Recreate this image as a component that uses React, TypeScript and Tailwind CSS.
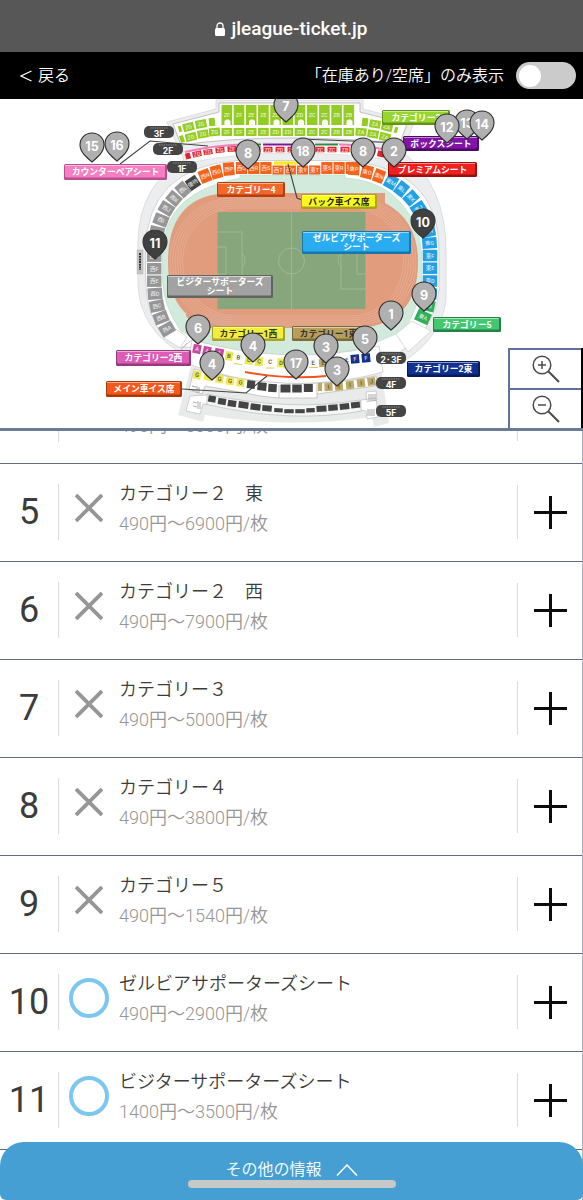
import { useState } from "react";

type Seat = [x: number, y: number, w: number, h: number, rot: number, fill: string, text: string];

const GREEN = "#93cc22";
const RED = "#e2232b";
const ORANGE = "#f2641c";
const GRAY = "#969696";
const BLUE = "#22a0e6";
const DARK = "#444";
const YELLOW = "#f0ea50";
const MAGENTA = "#c9489f";
const TAN = "#c0a962";
const NAVY = "#10308a";

const upper = ["ZF", "ZF", "ZE", "ZE", "ZD", "ZD", "ZD", "ZC", "ZC", "ZB", "ZB"];

const seats: Seat[] = [
  ...upper.map((t, i): Seat => [226.8 + i * 12.2, 115, 10.6, 20, 0, GREEN, t]),
  ...upper.map((t, i): Seat => [226.8 + i * 12.2, 132, 10.6, 8, 0, GREEN, t]),
  [212, 122, 6, 8, -6, GREEN, ""],
  [201, 124, 11, 8, -10, GREEN, "ZG"],
  [188.5, 127, 11, 8, -15, GREEN, "ZG"],
  [180, 129, 3, 6, -18, GREEN, ""],
  [214.5, 132, 11, 8, -5, GREEN, "ZG"],
  [203, 134, 11, 8, -9, GREEN, "ZG"],
  [191, 137, 11, 8, -14, GREEN, "ZG"],
  [182, 139, 4, 7, -18, GREEN, ""],
  [365, 122, 6, 8, 6, GREEN, ""],
  [375, 124, 11, 8, 9, GREEN, "ZA"],
  [387, 127, 11, 8, 14, GREEN, "ZA"],
  [396, 130, 3, 6, 18, GREEN, ""],
  [361, 132, 11, 8, 4, GREEN, "ZA"],
  [373, 134, 11, 8, 9, GREEN, "ZA"],
  [385, 137, 11, 8, 14, GREEN, "ZA"],
  [188, 156, 5, 6, -16, RED, ""],
  [197, 154, 9, 5.5, -12, RED, "ZG"],
  [208, 152, 9, 5.5, -8, RED, "ZG"],
  [220, 150, 9, 5.5, -5, RED, "ZG"],
  [232, 149, 9, 5.5, -3, RED, "ZF"],
  [244, 149, 9, 5.5, 0, RED, ""],
  [256, 149, 9, 5.5, 0, RED, ""],
  ...[268, 280, 292].map((x): Seat => [x, 149.5, 9, 5.5, 0, RED, "ZD"]),
  [304, 149, 9, 5.5, 0, RED, ""],
  ...[320, 332].map((x): Seat => [x, 149.5, 9, 5.5, 0, RED, "ZC"]),
  [345, 149.5, 9, 5.5, 0, RED, "ZB"],
  [357, 150, 9, 5.5, 3, RED, ""],
  [371, 151, 9, 5.5, 8, RED, "ZA"],
  [381, 154, 7, 6, 14, RED, ""],
  [193, 183, 12, 12, -34, DARK, "優待"],
  [205, 176, 11, 13, -22, ORANGE, "西N"],
  [216.5, 172, 11, 13, -14, ORANGE, "西O"],
  [228.8, 169, 11, 13, -5, ORANGE, "西P"],
  ...["西Q", "西R", "西S", "西T", "西Y", "東Y", "東T", "東S", "東R", "東Q"].map(
    (t, i): Seat => [241.5 + i * 12.2, i > 2 && i < 7 ? 170 : 168, 11.2, i > 2 && i < 7 ? 9 : 12, 0, ORANGE, t],
  ),
  [354, 169, 11, 12.5, 4, ORANGE, "東P"],
  [367, 172, 11.5, 13, 13, ORANGE, "東O"],
  [379, 176, 10.5, 13, 21, ORANGE, "東N"],
  [391, 182, 11.5, 13.5, 30, BLUE, "東M"],
  [401.5, 189, 11, 14, 38, BLUE, "東L"],
  [411, 198, 11, 14, 48, BLUE, "東K"],
  [418.5, 208.5, 14.5, 11, -33, BLUE, "東J"],
  [424, 220, 14.5, 11, -22, BLUE, "東I"],
  [428, 231.5, 14.5, 11, -12, BLUE, "東H"],
  [429.5, 243, 14.5, 11, -4, BLUE, "東G"],
  [430, 255.5, 14.5, 11.5, 0, BLUE, "東F"],
  [430, 268.2, 14.5, 11.5, 0, BLUE, "東E"],
  [430, 281, 14.5, 11.5, 0, BLUE, "東D"],
  [429.5, 293.5, 14.5, 11, 4, BLUE, "東C"],
  [427.5, 305.5, 14.5, 11, 13, "#2fae5c", "東B"],
  [423, 317, 14.5, 11.5, 25, "#2fae5c", "東A"],
  [183, 189.5, 11, 14, -42, GRAY, "西L"],
  [174, 198.5, 14, 11, 40, GRAY, "西K"],
  [166.5, 208.5, 14.5, 11, 31, GRAY, "西J"],
  [161, 220, 14.5, 11, 21, GRAY, "西I"],
  [157, 232, 14.5, 11, 12, GRAY, "西H"],
  [155, 244, 14.5, 11, 4, GRAY, "西H"],
  [154.2, 256.2, 14.5, 11.4, 0, GRAY, "西G"],
  [154.2, 268.7, 14.5, 11.4, 0, GRAY, "西F"],
  [154.2, 281.2, 14.5, 11.4, 0, GRAY, "西E"],
  [155, 293.7, 14.5, 11.4, -4, GRAY, "西D"],
  [157, 306, 14.5, 11.2, -12, GRAY, "西C"],
  [161, 317.7, 14.5, 11.2, -21, GRAY, "西B"],
  [167, 329, 14.5, 11.2, -30, GRAY, "西A"],
  [197, 349, 8, 9, 12, MAGENTA, "A"],
  [207, 351, 8, 9, 12, MAGENTA, "A"],
  [219, 353, 9, 9, 12, MAGENTA, "A"],
  [229, 356, 7.5, 9, 8, YELLOW, "B"],
  [238.5, 357.5, 7.5, 8, 8, "#fdfdf4", "B"],
  [249, 360, 8, 9, 8, YELLOW, "C"],
  [259, 361.5, 8, 9, 5, YELLOW, "C"],
  [270, 362, 8, 8, 4, "#fdfdf4", "C"],
  [281, 363, 7.5, 9, 2, YELLOW, "D"],
  [303, 363, 7, 8, 0, TAN, ""],
  [313, 363, 8, 8, -2, "#fbf9f2", "E"],
  [323, 363, 8, 8, -4, TAN, "E"],
  [347, 360, 7, 8, -6, "#fff", "E"],
  [355, 359, 8.5, 9, -5, NAVY, "F"],
  [366, 358, 8.5, 9, -5, NAVY, "F"],
  [197, 375, 8, 8, 10, YELLOW, "G"],
  [208, 377, 8, 7, 10, YELLOW, ""],
  [219.5, 379, 8, 8, 8, YELLOW, "G"],
  [230, 381, 8, 8, 8, YELLOW, "G"],
  [240.5, 382.5, 8, 8, 6, YELLOW, "G"],
  [251, 384.5, 8, 8, 6, DARK, ""],
  [262, 386.5, 9, 8, 5, DARK, ""],
  [272.5, 388, 8.5, 8, 4, DARK, ""],
  [285.5, 388.5, 10, 8, 0, DARK, ""],
  [297, 388.5, 9.5, 8, 0, DARK, ""],
  [308.3, 388, 9, 8, 0, DARK, ""],
  [320, 387, 4, 8, 0, TAN, ""],
  [328.5, 387, 8, 8, -3, TAN, "I"],
  [339, 386.5, 8, 8, -4, TAN, "I"],
  [350, 385, 8, 8, -6, TAN, "I"],
  [361, 383, 8, 8, -7, TAN, "I"],
  [371.5, 381.5, 8, 8, -8, TAN, "J"],
  [212, 399, 7.5, 6.5, 9, DARK, ""],
  [222, 401.5, 8, 6.5, 9, DARK, ""],
  [232, 403.5, 8.5, 6.5, 9, DARK, ""],
  [243.5, 405, 10, 6.5, 8, DARK, ""],
  [255.5, 407, 10, 6.5, 7, DARK, ""],
  [267, 408.3, 9.5, 6, 5, DARK, ""],
  [278.5, 410.3, 8.5, 4, 3, DARK, ""],
  [289, 411.2, 9.5, 4, 0, DARK, ""],
  [300, 411.2, 9.5, 4, 0, DARK, ""],
  [310.5, 410.3, 8.5, 4.2, -2, DARK, ""],
  [321.5, 408.7, 10, 6, -3, DARK, ""],
  [333, 407.6, 9.5, 6, -4, DARK, ""],
  [344.5, 406.5, 9.5, 6, -6, DARK, ""],
  [355.5, 405, 9, 6, -7, DARK, ""],
];

type Label = { x: number; y: number; w: number; h: number; fill: string; edge: string; ink: string; lines: string[] };

const labels: Label[] = [
  { x: 64, y: 164, w: 103, h: 16, fill: "#f57fc0", edge: "#b94f8c", ink: "#fff", lines: ["カウンターペアシート"] },
  { x: 217, y: 182, w: 68, h: 15, fill: "#f4672a", edge: "#b53f0d", ink: "#fff", lines: ["カテゴリー4"] },
  { x: 301, y: 194, w: 76, h: 15, fill: "#fbf91c", edge: "#a9a616", ink: "#222", lines: ["バック車イス席"] },
  { x: 302, y: 231, w: 109, h: 23, fill: "#2aacf0", edge: "#1676ae", ink: "#fff", lines: ["ゼルビアサポーターズ", "シート"] },
  { x: 382, y: 110, w: 68, h: 15, fill: "#97d530", edge: "#639417", ink: "#fff", lines: ["カテゴリー3"] },
  { x: 403, y: 136, w: 76, h: 15, fill: "#8014a6", edge: "#4d0a66", ink: "#fff", lines: ["ボックスシート"] },
  { x: 388, y: 162, w: 89, h: 15, fill: "#f0201f", edge: "#9d100f", ink: "#fff", lines: ["プレミアムシート"] },
  { x: 167, y: 275, w: 106, h: 23, fill: "#a2a2a2", edge: "#636363", ink: "#fff", lines: ["ビジターサポーターズ", "シート"] },
  { x: 212, y: 326, w: 73, h: 15, fill: "#f3ee3c", edge: "#a8a32c", ink: "#333", lines: ["カテゴリー1西"] },
  { x: 292, y: 326, w: 73, h: 15, fill: "#b79f5b", edge: "#7d6a34", ink: "#333", lines: ["カテゴリー1東"] },
  { x: 116, y: 350, w: 75, h: 16, fill: "#dd5cb6", edge: "#953a7a", ink: "#fff", lines: ["カテゴリー2西"] },
  { x: 106, y: 381, w: 76, h: 16, fill: "#f4581a", edge: "#ab390b", ink: "#fff", lines: ["メイン車イス席"] },
  { x: 433, y: 317, w: 68, h: 15, fill: "#42c970", edge: "#268047", ink: "#fff", lines: ["カテゴリー5"] },
  { x: 407, y: 361, w: 73, h: 16, fill: "#10318f", edge: "#081b56", ink: "#fff", lines: ["カテゴリー2東"] },
];

const floors: [number, number, string][] = [
  [144, 126, "3F"],
  [153, 143, "2F"],
  [167, 161, "1F"],
  [376, 352, "2･3F"],
  [376, 377, "4F"],
  [376, 405, "5F"],
];

// Marker number, horizontal centre and top edge in map units.
const pins: [number, number, number][] = [
  [15, 92, 132],
  [16, 117, 131],
  [8, 248, 139],
  [7, 286, 92],
  [18, 303, 137],
  [8, 363, 137],
  [2, 394, 137],
  [13, 467, 109],
  [14, 482, 110],
  [12, 447, 113],
  [10, 423, 208],
  [11, 155, 229],
  [9, 424, 281],
  [1, 391, 300],
  [5, 365, 325],
  [6, 198, 314],
  [4, 212, 350],
  [4, 253, 332],
  [17, 296, 349],
  [3, 326, 333],
  [3, 337, 356],
];

function StadiumMap() {
  return (
    <svg viewBox="0 99 583 329" className="block w-full" role="img" aria-label="座席図">
      {/* stand outlines */}
      <path
        d="M167 122 L216 109 V100 H363 V109 L414 122 L403 152 Q446 186 446 250 V300 Q442 335 406 360 L380 345 H200 L184 355 Q140 330 138 285 V240 Q140 184 184 160 Z"
        fill="#ecedee"
        stroke="#d5d7d8"
        strokeWidth="0.8"
      />
      <path d="M173 124 L219 112 V103 H360 V112 L407 124 L400 143 Q340 138 290 138 Q230 138 181 145 Z" fill="#fdfdfd" stroke="#aaa" strokeWidth="0.7" />
      <path d="M183 152 Q240 142 290 142 Q350 142 394 150 L390 160 Q345 153 290 153 Q235 153 188 163 Z" fill="#fff" stroke="#d0d0d0" strokeWidth="0.5" />
      <path
        d="M236 160.500 H345 Q439 168 439 250 V290 Q438 312 419 338 L400 352 L180 347 L164 337 Q146 315 145.500 280 V250 Q147 168 236 160.500 Z"
        fill="#fff"
        stroke="#bbb"
        strokeWidth="0.6"
      />
      <path
        d="M240 178 V175 H345 V178 Q384 180 405 208 Q420 228 421.500 252 V288 Q418 305 409 322 L398 333 L366 347 Q290 366 200 342 L181 331 Q163 306 162.500 280 V250 Q165 192 240 178 Z"
        fill="#d2eadc"
        stroke="#b9d8c8"
        strokeWidth="0.6"
      />
      <path d="M168 262 Q168 194 230 193 H385 V203 Q418 220 418 262 Q418 328 352 328 H232 Q168 328 168 262 Z" fill="#e19c7e" />
      <path d="M186 314 H232 V328 H205 Q192 324 186 316 Z" fill="#dd9e86" />
      {[0, 2.5, 5, 7.5, 10, 12.5].map((i) => (
        <rect
          key={i}
          x={170 + i}
          y={198 + i * 0.8}
          width={246 - i * 2}
          height={128 - i * 1.6}
          rx={63 - i * 0.8}
          fill="none"
          stroke="#ebbaa4"
          strokeWidth="0.5"
        />
      ))}
      {/* pitch */}
      <rect x="217.500" y="212" width="148" height="97" fill="#87a67c" />
      <g fill="none" stroke="#a6c098" strokeWidth="0.7">
        <path d="M291.500 212 V309 M217 232 H242 V289 H217 M217 247 H226 V274 H217 M366 232 H341 V289 H366 M366 247 H357 V274 H366" />
        <circle cx="291.500" cy="261" r="13" />
        <path d="M242 253 Q248 261 242 268 M341 253 Q335 261 341 268" />
      </g>
      {/* main stand */}
      <path d="M187 343 L180 351 L188 361 M181 349 L193 339" fill="none" stroke="#bbb" strokeWidth="0.8" />
      <path d="M164 338 L176 329 L187 337 L180 348 Z M396 334 L412 321 L431 331 L408 352 Z" fill="#fff" stroke="#ccc" strokeWidth="0.7" />
      <path d="M191 366 L178 415 L203 422 L205 415 Q290 429 372 417 L374 427 L389 423 L380 362 Q290 390 191 366 Z" fill="#e9ebeb" />
      <path d="M192 340 L188 364 Q240 383 290 384 Q345 383 383 372 L379 346 L372 347 Q290 366 192 340 Z" fill="#fff" stroke="#c4c4c4" strokeWidth="0.7" />
      <path d="M194 369 L189 390 L202 394 L205 386 L245 393 Q262 397 279 398 H317 V394 L368 387 L379 385 L376 376 Q290 394 194 369 Z" fill="#fff" stroke="#b4b4b4" strokeWidth="0.7" />
      <path d="M279 385 V398 M317 384 V394" stroke="#999" strokeWidth="0.6" />
      <path d="M207 394 L205 404 Q290 424 362 411 L360 400 Q290 412 207 394 Z" fill="#f4f5f5" stroke="#b4b4b4" strokeWidth="0.6" />
      <path d="M190 396 L186 411 L200 414 L203 404 L207 404 L207 395 Z M361 400 V410 L366 411 L367 419 L378 417 L376 398 Z M366 392 L367 402 L377 400 L376 391 Z" fill="#fff" stroke="#b4b4b4" strokeWidth="0.6" />
      <path
        d="M192 386 l4 1 m-4 3 l4 1 m1 -5 v7 m2 -6 v6 M193 402 l4 1 m-4 3 l4 1 m1 -6 v8 m2 -7 v7 M369 394 v7 m2 -7 v7 m2 -7 v7 m2 -7 v7 M368 409 v7 m2 -7 v7 m2 -7 v7 m2 -7 v7"
        stroke="#888"
        strokeWidth="0.7"
        fill="none"
      />
      <path d="M245 372 Q290 380 326 376" fill="none" stroke="#f0541c" strokeWidth="2" />
      <path d="M234 363.500 l8 1 M266 368 h8 M309 367.500 h9" stroke="#d8c860" strokeWidth="1" />
      {/* stripes above the red row */}
      <g fill="none" strokeWidth="1.800">
        <path d="M185 152 Q215 145 243 144.500 M339 144.500 Q365 145 386 150" stroke="#f07fc0" />
        <path d="M243 144.500 H261 M315 144.500 H338" stroke="#2f8a48" />
        <path d="M263 144.500 H314" stroke="#76189a" />
        <path d="M274 163 H298" stroke="#f7ea22" strokeWidth="3.400" />
      </g>
      {seats.map(([x, y, w, h, rot, fill, text], i) => (
        <g key={i} transform={`translate(${x} ${y}) rotate(${rot})`}>
          <rect x={-w / 2} y={-h / 2} width={w} height={h} fill={fill} />
          {text && (
            <text
              y="2"
              textAnchor="middle"
              fontSize={text.length === 1 ? 6 : 5.5}
              fontWeight="500"
              fill={text.length === 1 ? (fill === NAVY || fill === MAGENTA ? "#e8c8e8" : "#555") : "#ffffffc8"}
            >
              {text}
            </text>
          )}
        </g>
      ))}
      {[224.500, 249, 273.500, 298, 322, 346.500].map((x) => (
        <path key={x} d={`M${x} 125.500 v-4.500 l2 -1.500 h2 l2 1.500 v4.500 z`} fill="#fff" />
      ))}
      <rect x="137" y="250" width="6" height="24" fill="#c4c4c4" stroke="#aaa" strokeWidth="0.4" />
      <path d="M140 253 V270" stroke="#333" strokeWidth="2" strokeDasharray="2 0.700" />
      {/* leader lines */}
      <g fill="none" stroke="#444" strokeWidth="1.100">
        <path d="M120 164 L150 141 L208 146" />
        <path d="M300 139 L403 143" />
        <path d="M288 164 L297 198 L302 200" />
        <path d="M182 389 L246 393 L267 376" />
      </g>
      {floors.map(([x, y, t]) => (
        <g key={t}>
          <rect x={x} y={y} width="30" height="12" rx="5" fill="#454545" />
          <path d={`M${x + 6} ${y + 2} h18`} stroke="#8d8d8d" strokeWidth="1.200" strokeDasharray="1.500 0.800" />
          <text x={x + 15} y={y + 10.5} textAnchor="middle" fontSize="8.500" fontWeight="700" fill="#fff" fontFamily="Inter, sans-serif">
            {t}
          </text>
        </g>
      ))}
      {labels.map((l) => (
        <g key={l.lines[0]}>
          <rect x={l.x} y={l.y} width={l.w} height={l.h} rx="1.500" fill={l.edge} />
          <rect x={l.x + 1} y={l.y + 1} width={l.w - 3} height={l.h - 3.5} rx="1" fill={l.fill} />
          <path d={`M${l.x + 1} ${l.y + 1.5} h${l.w - 3}`} stroke="#ffffff80" strokeWidth="1" />
          {l.lines.map((t, i) => (
            <text
              key={t}
              x={l.x + l.w / 2}
              y={l.lines.length === 1 ? l.y + 10.8 : l.y + 9.5 + i * 9.5}
              textAnchor="middle"
              fontSize="8.800"
              fontWeight="700"
              fill={l.ink}
            >
              {t}
            </text>
          ))}
        </g>
      ))}
    </svg>
  );
}

function Pin({ n, x, y }: { n: number; x: number; y: number }) {
  const open = n === 10 || n === 11;
  return (
    <button
      type="button"
      aria-label={`エリア${n}`}
      className="absolute h-[31px] w-[26px] -translate-x-1/2"
      style={{ left: `${(x / 583) * 100}%`, top: `${((y - 99) / 329) * 100}%` }}
    >
      <svg viewBox="0 0 26 31" className="block h-full w-full">
        <path
          d="M13 1 C6.300 1 1 6.200 1 12.700 C1 20 7.500 25.500 13 30 C18.500 25.500 25 20 25 12.700 C25 6.200 19.700 1 13 1 Z"
          fill={open ? "#404040" : "#b0b0b0"}
          stroke={open ? "#333" : "#2b2b2b"}
          strokeWidth="1.100"
        />
        <text x="13" y="19" textAnchor="middle" fontSize="12.500" fontWeight="700" fill="#fff" fontFamily="Inter, sans-serif">
          {n}
        </text>
      </svg>
    </button>
  );
}

function Magnifier({ plus }: { plus: boolean }) {
  return (
    <svg viewBox="0 0 28 28" className="h-7 w-7" fill="none" stroke="#4a4a4a" strokeWidth="1.500">
      <circle cx="10" cy="10" r="8.800" />
      <path d="M16.500 16.500 L27 27" strokeWidth="2" />
      <path d={plus ? "M6 10 H14 M10 6 V14" : "M6 10 H14"} />
    </svg>
  );
}

const rows = [
  { n: 4, name: "カテゴリー１　西", price: "490円〜5000円/枚", open: false },
  { n: 5, name: "カテゴリー２　東", price: "490円〜6900円/枚", open: false },
  { n: 6, name: "カテゴリー２　西", price: "490円〜7900円/枚", open: false },
  { n: 7, name: "カテゴリー３", price: "490円〜5000円/枚", open: false },
  { n: 8, name: "カテゴリー４", price: "490円〜3800円/枚", open: false },
  { n: 9, name: "カテゴリー５", price: "490円〜1540円/枚", open: false },
  { n: 10, name: "ゼルビアサポーターズシート", price: "490円〜2900円/枚", open: true },
  { n: 11, name: "ビジターサポーターズシート", price: "1400円〜3500円/枚", open: true },
];

export default function App() {
  const [onlyOpen, setOnlyOpen] = useState(false);
  return (
    <div className="flex h-screen flex-col overflow-hidden bg-white font-['Roboto','Noto_Sans_CJK_JP',sans-serif] text-[#3c3c3c]">
      <header className="shrink-0">
        <div className="flex h-[52px] items-center justify-center gap-1.5 bg-[#575757] pt-1.5 text-[19px] font-medium text-white">
          <svg viewBox="0 0 10 14" className="h-3.5 w-2.5" aria-hidden="true">
            <rect y="6" width="10" height="8" rx="1.500" fill="#fff" />
            <path d="M2 7 V4 a3 3 0 0 1 6 0 V7" fill="none" stroke="#fff" strokeWidth="1.300" />
          </svg>
          jleague-ticket.jp
        </div>
        <div className="flex h-[47px] items-center justify-between bg-black pr-[7px] pl-5 text-base font-[350] text-white">
          <a href="#back" className="flex items-center gap-1.5">
            <svg viewBox="0 0 12 12" className="h-3 w-3" fill="none" stroke="#fff" strokeWidth="1.300" aria-hidden="true">
              <path d="M11.500 1 L1 6 L11.500 11" />
            </svg>
            戻る
          </a>
          <label className="flex items-center gap-3">
            「在庫あり/空席」のみ表示
            <input
              type="checkbox"
              checked={onlyOpen}
              onChange={(e) => setOnlyOpen(e.target.checked)}
              className="peer sr-only"
            />
            <span className="flex h-[27px] w-[60px] items-center rounded-full bg-[#cbcbcb] px-[3px] peer-checked:justify-end peer-checked:bg-[#459fd3]">
              <span className="h-[22px] w-[22px] rounded-full bg-white" />
            </span>
          </label>
        </div>
      </header>

      <section className="relative shrink-0 overflow-hidden border-b-[3px] border-[#6b7a95]">
        <StadiumMap />
        {pins.map(([n, x, y]) => (
          <Pin key={`${n}-${x}`} n={n} x={x} y={y} />
        ))}
        <div className="absolute right-0 bottom-0 flex w-[75px] flex-col border-r-2 border-black">
          <button type="button" aria-label="拡大" className="flex h-10 items-center justify-center border-t-2 border-l-2 border-[#5f7399] bg-white">
            <Magnifier plus />
          </button>
          <button type="button" aria-label="縮小" className="flex h-10 items-center justify-center border-t-2 border-l-2 border-[#5f7399] bg-white">
            <Magnifier plus={false} />
          </button>
        </div>
      </section>

      <main className="min-h-0 flex-1 overflow-hidden border-r border-[#a8adb5]">
        <ul className="-mt-[65px]">
          {rows.map((r) => (
            <li key={r.n} className="flex h-[98px] items-start border-b border-[#5f6c82] pt-5">
              <div className="flex h-14 w-[59px] shrink-0 items-center justify-center border-r border-[#dcdcdc] text-4xl">
                {r.n}
              </div>
              <div className="flex h-12 w-[60px] shrink-0 items-center justify-center">
                {r.open ? (
                  <svg viewBox="0 0 40 40" className="h-10 w-10" role="img" aria-label="空席あり">
                    <circle cx="20" cy="20" r="18" fill="none" stroke="#7cc7f0" strokeWidth="4" />
                  </svg>
                ) : (
                  <svg viewBox="0 0 28 28" className="h-7 w-7" role="img" aria-label="空席なし">
                    <path d="M1 1 L27 27 M27 1 L1 27" stroke="#969696" strokeWidth="3.800" />
                  </svg>
                )}
              </div>
              <div className="min-w-0 flex-1">
                <p className="truncate text-lg leading-5 font-[350]">{r.name}</p>
                <p className="mt-2.5 truncate text-lg leading-5 font-[350] text-[#969696]">{r.price}</p>
              </div>
              <button
                type="button"
                aria-label={`${r.name}を開く`}
                className="mt-px flex h-[54px] w-[65px] shrink-0 items-center justify-center border-l border-[#dcdcdc]"
              >
                <svg viewBox="0 0 33 33" className="h-[33px] w-[33px]" aria-hidden="true">
                  <path d="M16.500 0 V33 M0 16.500 H33" stroke="#0c0c0c" strokeWidth="3" />
                </svg>
              </button>
            </li>
          ))}
        </ul>
      </main>

      <footer className="fixed inset-x-0 bottom-0">
        <button
          type="button"
          className="flex h-[58px] w-full flex-col items-center rounded-t-3xl rounded-b-md bg-[#459fd3] pt-[18px] text-white"
        >
          <span className="flex items-center gap-3.5 text-base leading-5 font-[350]">
            その他の情報
            <svg viewBox="0 0 22 12" className="h-3 w-[22px]" fill="none" stroke="#fff" strokeWidth="1.500" aria-hidden="true">
              <path d="M1 11.500 L11 1 L21 11.500" />
            </svg>
          </span>
          <span className="h-2 w-[208px] rounded-full bg-[#c9c9c9]" />
        </button>
      </footer>
    </div>
  );
}
